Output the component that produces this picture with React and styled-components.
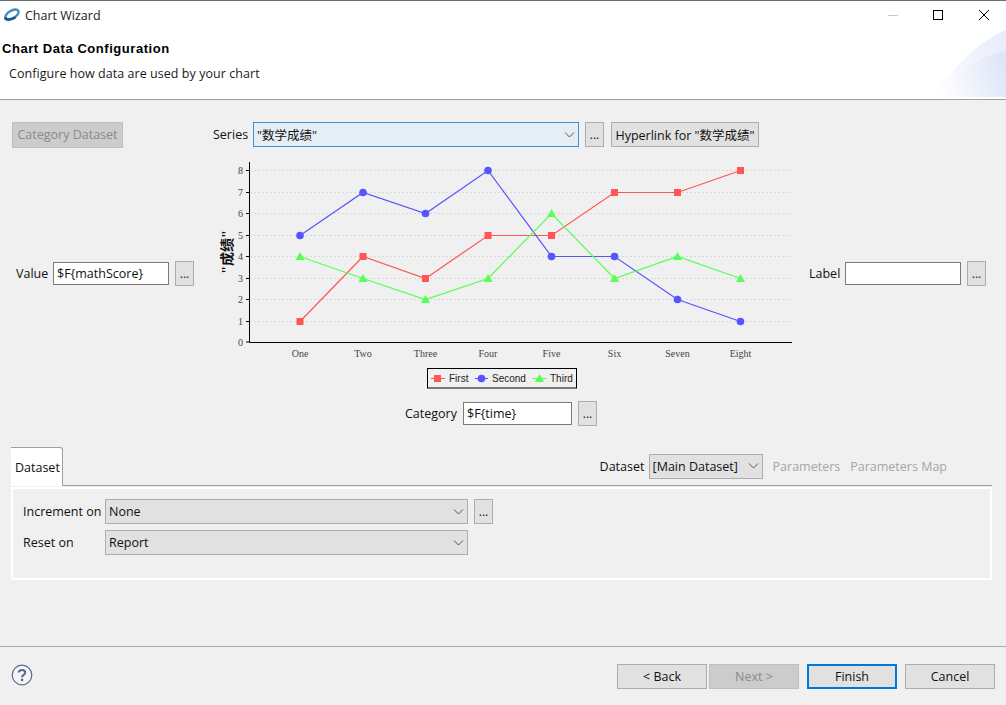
import React from "react";
import styled, { createGlobalStyle } from "styled-components";

const GlobalStyle = createGlobalStyle`
  html, body {
    margin: 0;
    padding: 0;
    background: #f0f0f0;
  }
`;

const UI_FONT = `"Open Sans", "Noto Sans CJK SC", sans-serif`;

const xs = [300, 363, 425.5, 488, 551.5, 614.5, 677.5, 740.5];
const ys = [342, 321.5, 299.5, 278.5, 256.5, 235.5, 213.5, 192.5, 170.5];
const categories = ["One", "Two", "Three", "Four", "Five", "Six", "Seven", "Eight"];
const series = [
  { name: "First", color: "#ff5555", values: [1, 4, 3, 5, 5, 7, 7, 8], marker: "square" },
  { name: "Second", color: "#5555ff", values: [5, 7, 6, 8, 4, 4, 2, 1], marker: "circle" },
  { name: "Third", color: "#55ff55", values: [4, 3, 2, 3, 6, 3, 4, 3], marker: "triangle" },
];

const Marker = ({ kind, x, y, color }) => {
  if (kind === "square") return <rect x={x - 3.5} y={y - 3.5} width="7" height="7" fill={color} />;
  if (kind === "circle") return <circle cx={x} cy={y} r="3.8" fill={color} />;
  return <polygon points={`${x},${y - 4.5} ${x + 4.5},${y + 3.5} ${x - 4.5},${y + 3.5}`} fill={color} />;
};

const Chart = () => (
  <ChartSvg viewBox="213 154 596 239" width="596" height="239">
    {ys.slice(1).map((y) => (
      <line key={y} x1="250" x2="791" y1={y} y2={y} stroke="#d9d9d9" strokeDasharray="2 2" />
    ))}
    {series.map((s) => (
      <polyline
        key={s.name}
        fill="none"
        stroke={s.color}
        strokeWidth="1.2"
        points={s.values.map((v, i) => `${xs[i]},${ys[v]}`).join(" ")}
      />
    ))}
    {series.map((s) =>
      s.values.map((v, i) => (
        <Marker key={s.name + i} kind={s.marker} x={xs[i]} y={ys[v]} color={s.color} />
      ))
    )}
    <path d="M249.5 162V342.5H792" fill="none" stroke="#000" />
    {ys.map((y, i) => (
      <g key={y}>
        <line x1="246" x2="249" y1={y} y2={y} stroke="#000" />
        <AxisText x="243" y={y + 3.5} textAnchor="end">{i}</AxisText>
      </g>
    ))}
    {categories.map((c, i) => (
      <AxisText key={c} x={xs[i]} y="357" textAnchor="middle">{c}</AxisText>
    ))}
    <AxisTitle transform="translate(232 252) rotate(-90)" textAnchor="middle">"成绩"</AxisTitle>
    <rect x="427.5" y="368.5" width="149" height="19.5" fill="none" stroke="#000" />
    <line x1="431" x2="445" y1="378.5" y2="378.5" stroke="#ff5555" />
    <Marker kind="square" x={437.5} y={378.5} color="#ff5555" />
    <LegendText x="449" y="382">First</LegendText>
    <line x1="475" x2="488" y1="378.5" y2="378.5" stroke="#5555ff" />
    <Marker kind="circle" x={481.5} y={378.5} color="#5555ff" />
    <LegendText x="492" y="382">Second</LegendText>
    <line x1="532" x2="547" y1="378.5" y2="378.5" stroke="#55ff55" />
    <Marker kind="triangle" x={539.5} y={378.5} color="#55ff55" />
    <LegendText x="550" y="382">Third</LegendText>
  </ChartSvg>
);

const Logo = () => (
  <svg width="18" height="16" viewBox="0 0 18 16">
    <ellipse cx="9" cy="7.5" rx="7.4" ry="3.8" transform="rotate(-30 9 7.5)" fill="#fff" stroke="#3d8cc4" strokeWidth="2.4" />
    <path d="M2 10.5C3 13.5 8.5 13 12.5 10.2" fill="none" stroke="#14598f" strokeWidth="2.6" />
  </svg>
);

const Chevron = () => (
  <svg width="11" height="6" viewBox="0 0 11 6">
    <path d="M1 .5L5.5 5 10 .5" fill="none" stroke="#555" />
  </svg>
);

const App = () => (
  <Window>
    <GlobalStyle />
    <TitleBar>
      <Logo />
      <TitleText>Chart Wizard</TitleText>
      <WindowControls>
        <svg width="10" height="10" viewBox="0 0 10 10"><path d="M0 5.5H10" stroke="#c8c8c8" /></svg>
        <svg width="10" height="10" viewBox="0 0 10 10"><rect x=".5" y=".5" width="9" height="9" fill="none" stroke="#000" /></svg>
        <svg width="10" height="10" viewBox="0 0 10 10"><path d="M0 0L10 10M10 0L0 10" stroke="#000" /></svg>
      </WindowControls>
    </TitleBar>
    <Header>
      <HeaderTitle>Chart Data Configuration</HeaderTitle>
      <HeaderHint>Configure how data are used by your chart</HeaderHint>
      <Corner viewBox="0 0 73 67" width="73" height="67">
        <defs>
          <linearGradient id="fade" x1="0" x2="1" y1="1" y2="0">
            <stop offset="0" stopColor="#ffffff" />
            <stop offset="1" stopColor="#e6ebfb" />
          </linearGradient>
          <linearGradient id="fade2" x1="0" x2="1" y1="0.7" y2="0.5">
            <stop offset="0" stopColor="#ffffff" />
            <stop offset="1" stopColor="#dfe6f8" />
          </linearGradient>
        </defs>
        <path d="M0 67C18 40 44 12 73 0V67Z" fill="url(#fade)" />
        <path d="M3 67C20 44 44 26 73 21V67Z" fill="url(#fade2)" />
      </Corner>
    </Header>
    <Body>
      <ChartArea>
        <GhostButton>Category Dataset</GhostButton>
        <SeriesRow>
          <FieldLabel $width={40}>Series</FieldLabel>
          <Select $width={326} $focused>
            <span>"数学成绩"</span>
            <Chevron />
          </Select>
          <DotsButton>...</DotsButton>
          <Button $width={148} $height={25}>Hyperlink for "数学成绩"</Button>
        </SeriesRow>
        <AxisField $inset={4}>
          <FieldLabel $width={37}>Value</FieldLabel>
          <Input $width={116}>$F{"{mathScore}"}</Input>
          <DotsButton>...</DotsButton>
        </AxisField>
        <Chart />
        <AxisField>
          <FieldLabel $width={36}>Label</FieldLabel>
          <Input $width={116} />
          <DotsButton>...</DotsButton>
        </AxisField>
        <CategoryRow>
          <FieldLabel $width={58}>Category</FieldLabel>
          <Input $width={109}>$F{"{time}"}</Input>
          <DotsButton>...</DotsButton>
        </CategoryRow>
      </ChartArea>
      <TabBar>
        <Tab>Dataset</Tab>
        <TabTools>
          <FieldLabel $width={49}>Dataset</FieldLabel>
          <Select $width={114}>
            <span>[Main Dataset]</span>
            <Chevron />
          </Select>
          <LinkOff>Parameters</LinkOff>
          <LinkOff>Parameters Map</LinkOff>
        </TabTools>
      </TabBar>
      <Panel>
        <FieldLabel>Increment on</FieldLabel>
        <Select $width={363}>
          <span>None</span>
          <Chevron />
        </Select>
        <DotsButton>...</DotsButton>
        <FieldLabel>Reset on</FieldLabel>
        <Select $width={363}>
          <span>Report</span>
          <Chevron />
        </Select>
      </Panel>
    </Body>
    <Footer>
      <svg width="22" height="22" viewBox="0 0 22 22">
        <circle cx="11" cy="11" r="9.8" fill="#f4f5f8" stroke="#566a8c" strokeWidth="1.2" />
        <path d="M7.8 8.6C7.8 6.8 9.2 6 11 6c1.9 0 3.2 1 3.2 2.6 0 2.2-3.1 2.4-3.1 4.6" fill="none" stroke="#566a8c" strokeWidth="2" />
        <circle cx="11.1" cy="15.9" r="1.3" fill="#566a8c" />
      </svg>
      <FooterButtons>
        <Button $width={90} $height={25}>&lt; Back</Button>
        <Button $width={90} $height={25} $disabled>Next &gt;</Button>
        <Button $width={90} $height={25} $primary>Finish</Button>
        <Button $width={90} $height={25}>Cancel</Button>
      </FooterButtons>
    </Footer>
  </Window>
);

const Window = styled.div`
  width: 1006px;
  height: 705px;
  display: flex;
  flex-direction: column;
  overflow: hidden;
  background: #f0f0f0;
  color: #111;
  font: 12.5px ${UI_FONT};
`;

const TitleBar = styled.div`
  box-sizing: border-box;
  height: 31px;
  flex: none;
  display: flex;
  align-items: center;
  gap: 4px;
  padding: 0 0 2px 3px;
  background: #fff;
  border-top: 1px solid #6e6e6e;
`;

const TitleText = styled.span`
  color: #222;
`;

const WindowControls = styled.div`
  margin-left: auto;
  display: flex;
  gap: 35px;
  padding-right: 17px;
  svg {
    display: block;
  }
  svg:last-child {
    margin-left: 1px;
  }
`;

const Header = styled.div`
  position: relative;
  height: 68px;
  flex: none;
  background: #fff;
  border-bottom: 1px solid #a0a0a0;
  overflow: hidden;
`;

const HeaderTitle = styled.div`
  padding: 10px 0 0 2px;
  font: bold 13px "Liberation Sans", sans-serif;
  letter-spacing: 0.55px;
  color: #000;
`;

const HeaderHint = styled.div`
  padding: 9px 0 0 9px;
  color: #1a1a1a;
  letter-spacing: 0.05px;
`;

const Corner = styled.svg`
  position: absolute;
  right: 0;
  top: -1px;
`;

const Body = styled.div`
  flex: 1;
  min-height: 0;
`;

const ChartArea = styled.div`
  display: grid;
  grid-template-columns: 201px 596px auto;
  grid-template-rows: 26px 239px 26px;
  row-gap: 6px;
  padding: 22px 0 0 12px;
  align-items: center;
`;

const ChartSvg = styled.svg`
  display: block;
`;

const AxisText = styled.text`
  font: 10px "Liberation Serif", serif;
  fill: #444;
`;

const AxisTitle = styled.text`
  font: bold 14px "Liberation Serif", "Noto Sans CJK SC", serif;
  fill: #111;
`;

const LegendText = styled.text`
  font: 10px "Liberation Sans", sans-serif;
  fill: #222;
`;

const Button = styled.div`
  box-sizing: border-box;
  width: ${(p) => p.$width}px;
  height: ${(p) => p.$height}px;
  display: flex;
  align-items: center;
  justify-content: center;
  white-space: nowrap;
  background: ${(p) => (p.$disabled ? "#cccccc" : "#e1e1e1")};
  color: ${(p) => (p.$disabled ? "#8a8a8a" : "#111")};
  border: ${(p) => (p.$primary ? "2px solid #0078d7" : `1px solid ${p.$disabled ? "#bfbfbf" : "#adadad"}`)};
`;

const GhostButton = styled.div`
  box-sizing: border-box;
  width: 111px;
  height: 26px;
  display: flex;
  align-items: center;
  justify-content: center;
  padding-bottom: 2px;
  background: #cccccc;
  border: 1px solid #bfbfbf;
  color: #8a8a8a;
  white-space: nowrap;
`;

const DotsButton = styled.div`
  box-sizing: border-box;
  width: 19px;
  height: 25px;
  display: flex;
  align-items: center;
  justify-content: center;
  background: #e1e1e1;
  border: 1px solid #adadad;
  font-size: 12px;
`;

const SeriesRow = styled.div`
  grid-column: 2 / span 2;
  align-self: start;
  display: flex;
  align-items: center;
  gap: 6px;
  & > :first-child {
    margin-right: -6px;
  }
  & > :last-child {
    margin-left: 1px;
  }
`;

const AxisField = styled.div`
  display: flex;
  align-items: center;
  gap: 6px;
  padding-left: ${(p) => p.$inset || 0}px;
  & > :first-child {
    margin-right: -6px;
  }
`;

const CategoryRow = styled.div`
  grid-column: 2;
  align-self: end;
  display: flex;
  align-items: center;
  gap: 6px;
  padding: 0 0 0 192px;
  margin-bottom: -1px;
  & > :first-child {
    margin-right: -6px;
  }
`;

const FieldLabel = styled.span`
  flex: none;
  width: ${(p) => (p.$width ? `${p.$width}px` : "auto")};
  white-space: nowrap;
`;

const Input = styled.div`
  box-sizing: border-box;
  width: ${(p) => p.$width}px;
  height: 23px;
  display: flex;
  align-items: center;
  padding-left: 3px;
  background: #fff;
  border: 1px solid #7a7a7a;
`;

const Select = styled.div`
  box-sizing: border-box;
  width: ${(p) => p.$width}px;
  height: 25px;
  display: flex;
  align-items: center;
  justify-content: space-between;
  padding: 0 3px 0 3px;
  white-space: nowrap;
  background: ${(p) => (p.$focused ? "#e5edf5" : "#e1e1e1")};
  border: 1px solid ${(p) => (p.$focused ? "#3f8fd2" : "#adadad")};
`;

const TabBar = styled.div`
  display: flex;
  align-items: stretch;
  height: 38px;
  margin: 22px 14px 0 11px;
  border-bottom: 1px solid #a0a0a0;
`;

const Tab = styled.div`
  box-sizing: border-box;
  width: 52px;
  height: 39px;
  display: flex;
  align-items: center;
  padding-left: 4px;
  background: #fff;
  border-top: 1px solid #a0a0a0;
  border-right: 1px solid #a0a0a0;
  border-top-right-radius: 3px;
`;

const TabTools = styled.div`
  margin-left: auto;
  display: flex;
  align-items: center;
  padding-right: 45px;
`;

const LinkOff = styled.span`
  color: #a6a6a6;
  margin-left: 10px;
  white-space: nowrap;
`;

const Panel = styled.div`
  box-sizing: border-box;
  height: 93px;
  margin: 1px 14px 0 11px;
  padding: 10px 0 0 10px;
  border: 2px solid #fff;
  display: grid;
  grid-template-columns: 82px 363px 19px;
  grid-auto-rows: 25px;
  column-gap: 0;
  row-gap: 6px;
  align-items: center;
  & > :nth-child(3) {
    margin-left: 6px;
  }
`;

const Footer = styled.div`
  box-sizing: border-box;
  height: 59px;
  flex: none;
  border-top: 1px solid #a8a8a8;
  display: flex;
  align-items: flex-start;
  justify-content: space-between;
  padding: 17px 11px 0 11px;
`;

const FooterButtons = styled.div`
  display: flex;
  gap: 2px;
  & > :nth-child(n + 3) {
    margin-left: 6px;
  }
`;

export default App;
